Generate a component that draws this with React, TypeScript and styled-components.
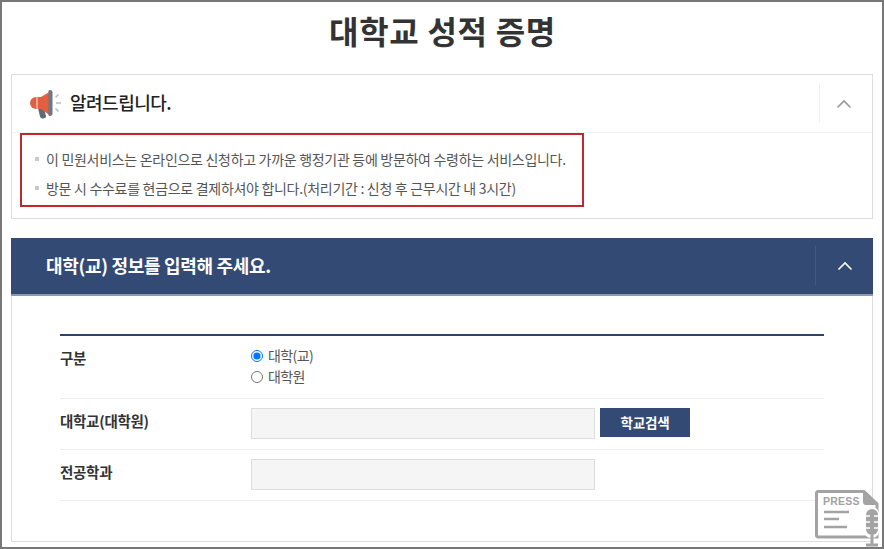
import React from "react";
import styled, { createGlobalStyle } from "styled-components";

const GlobalStyle = createGlobalStyle`
  html, body {
    margin: 0;
    padding: 0;
    background: #fff;
  }
  * {
    box-sizing: border-box;
  }
`;

const Frame = styled.div`
  position: relative;
  width: 884px;
  height: 549px;
  overflow: hidden;
  border: 2px solid #777;
  padding: 0 9px;
  background: #fff;
  font-family: "Noto Sans CJK KR", "Noto Sans", sans-serif;
  color: #333;
`;

const Title = styled.h1`
  margin: 0;
  height: 72px;
  padding: 5px 0 0 1px;
  text-align: center;
  font-size: 32px;
  line-height: 46px;
  font-weight: 700;
  letter-spacing: 0.7px;
  color: #333;
`;

const NoticeCard = styled.section`
  height: 145px;
  border: 1px solid #ddd;
`;

const CardHead = styled.div<{ $dark?: boolean }>`
  display: flex;
  align-items: center;
  height: ${(p) => (p.$dark ? "56px" : "58px")};
  margin: ${(p) => (p.$dark ? "0 -1px" : "0")};
  padding: ${(p) => (p.$dark ? "0 0 0 35px" : "0 0 0 18px")};
  background: ${(p) => (p.$dark ? "#334a75" : "#fff")};
  border-bottom: 1px solid ${(p) => (p.$dark ? "#334a75" : "#f1f1f1")};
`;

const CardTitle = styled.h2<{ $dark?: boolean }>`
  flex: 1;
  margin: ${(p) => (p.$dark ? "-2px 0 0 0" : "-3px 0 0 7px")};
  font-size: 18px;
  line-height: 26px;
  font-weight: ${(p) => (p.$dark ? 700 : 500)};
  letter-spacing: ${(p) => (p.$dark ? "-0.32px" : "-0.5px")};
  color: ${(p) => (p.$dark ? "#fff" : "#222")};
`;

const Toggle = styled.div<{ $dark?: boolean }>`
  display: flex;
  align-items: center;
  justify-content: center;
  width: ${(p) => (p.$dark ? "58px" : "53px")};
  height: 39px;
  padding-right: ${(p) => (p.$dark ? "0" : "4px")};
  border-left: 1px solid ${(p) => (p.$dark ? "#44597f" : "#f0f0f0")};
  color: ${(p) => (p.$dark ? "#fff" : "#999")};
`;

const RedBox = styled.div`
  width: 564px;
  height: 74px;
  margin: 0 0 0 8px;
  padding: 9px 0 0 13px;
  border: 2px solid #c1272d;
`;

const NoticeLine = styled.p`
  display: flex;
  align-items: center;
  margin: 0;
  height: 29px;
  font-size: 14px;
  letter-spacing: -0.3px;
  color: #555;
  white-space: nowrap;

  &::before {
    content: "";
    width: 4px;
    height: 4px;
    margin: 1px 7px 0 0;
    background: #c8c8c8;
  }
`;

const FormCard = styled.section`
  height: 304px;
  margin-top: 19px;
  border: 1px solid #ddd;
  border-top: 0;
`;

const DarkStrip = styled.div`
  height: 2px;
  margin: 0 -1px;
  background: #8c99af;
`;

const FormTable = styled.div`
  margin: 38px 48px 0 48px;
  border-top: 2px solid #2f4368;
`;

const Row = styled.div<{ $tall?: boolean }>`
  display: flex;
  height: ${(p) => (p.$tall ? "63px" : "51px")};
  padding-top: ${(p) => (p.$tall ? "8px" : "9px")};
  border-bottom: 1px solid #eee;
`;

const RowLabel = styled.div<{ $tall?: boolean }>`
  width: 191px;
  margin-top: ${(p) => (p.$tall ? "0" : "-1px")};
  font-size: 14.5px;
  line-height: 27px;
  font-weight: 700;
  letter-spacing: -0.28px;
  color: #333;
`;

const RadioGroup = styled.div`
  display: flex;
  flex-direction: column;
`;

const RadioLabel = styled.label`
  display: flex;
  align-items: center;
  height: 21px;
  font-size: 14px;
  letter-spacing: -0.6px;
  color: #555;
`;

const Radio = styled.input`
  width: 12px;
  height: 12px;
  margin: 3px 5px 0 0;
`;

const TextBox = styled.input`
  width: 344px;
  height: 31px;
  border: 1px solid #ddd;
  background: #f5f5f5;
`;

const SearchButton = styled.button`
  width: 90px;
  height: 29px;
  margin-left: 5px;
  padding: 0 0 1px;
  border: 0;
  background: #334a75;
  color: #fff;
  font-family: inherit;
  font-size: 13.5px;
  font-weight: 700;
  letter-spacing: -0.2px;
`;

const PressBadge = styled.svg`
  position: absolute;
  right: 1px;
  bottom: 0;
`;

function Chevron() {
  return (
    <svg width="16" height="10" viewBox="0 0 16 10" fill="none">
      <path d="M1.5 8.5 8 2l6.5 6.5" stroke="currentColor" strokeWidth="1.6" />
    </svg>
  );
}

function Megaphone() {
  return (
    <svg width="33" height="30" viewBox="0 0 33 30">
      <path d="M8 19l6 1 2 7c.3 1.500-1 2.500-3 2.500-1.500 0-2.500-.5-3-2z" fill="#5d6b78" />
      <path d="M6 8h5v12H6a6 6 0 0 1 0-12z" fill="#e2603f" />
      <path d="M11 8l9-5.500v24L11 20z" fill="#e2603f" />
      <path d="M6 8h2v12H6z" fill="#f0a48f" />
      <path d="M20 1c1.500 0 2.500 1 2.500 2.500v21c0 1.500-1 2.500-2.500 2.500-1 0-1.500-.5-1.500-1V2c0-.5.500-1 1.500-1z" fill="#6b7885" />
      <path d="M25.500 8.500l3-3M26 14h5M25.500 19.500l3 3" stroke="#b4bcc4" strokeWidth="1.500" />
    </svg>
  );
}

function Press() {
  return (
    <PressBadge width="66" height="60" viewBox="0 0 66 60">
      <path
        d="M3 4.500h46L62 17v33H3a1.500 1.500 0 0 1-1.500-1.500V6A1.500 1.500 0 0 1 3 4.500z"
        fill="#fff"
        stroke="#a3a3a3"
        strokeWidth="3"
      />
      <path d="M48 4.500V15a3 3 0 0 0 3 3h11z" fill="#a3a3a3" />
      <text x="8" y="18" fontFamily="Liberation Sans, sans-serif" fontSize="10.500" fontWeight="700" letterSpacing="0.200" fill="#a3a3a3">
        PRESS
      </text>
      <path d="M9 25h25M9 32h15M9 40h23" stroke="#a3a3a3" strokeWidth="2.500" />
      <rect x="49" y="20" width="15" height="31" rx="7" fill="#fff" />
      <rect x="51" y="22" width="12" height="26" rx="6" fill="#a3a3a3" />
      <path d="M50 29h5M59 29h5M50 35h5M59 35h5M50 41h5M59 41h5" stroke="#fff" strokeWidth="1.500" />
      <path d="M57 48v9M51 58h12" stroke="#a3a3a3" strokeWidth="3" />
    </PressBadge>
  );
}

export default function App() {
  return (
    <Frame>
      <GlobalStyle />
      <Title>대학교 성적 증명</Title>
      <NoticeCard>
        <CardHead>
          <Megaphone />
          <CardTitle>알려드립니다.</CardTitle>
          <Toggle>
            <Chevron />
          </Toggle>
        </CardHead>
        <RedBox>
          <NoticeLine>이 민원서비스는 온라인으로 신청하고 가까운 행정기관 등에 방문하여 수령하는 서비스입니다.</NoticeLine>
          <NoticeLine>방문 시 수수료를 현금으로 결제하셔야 합니다.(처리기간 : 신청 후 근무시간 내 3시간)</NoticeLine>
        </RedBox>
      </NoticeCard>
      <FormCard>
        <CardHead $dark>
          <CardTitle $dark>대학(교) 정보를 입력해 주세요.</CardTitle>
          <Toggle $dark>
            <Chevron />
          </Toggle>
        </CardHead>
        <DarkStrip />
        <FormTable>
          <Row $tall>
            <RowLabel $tall>구분</RowLabel>
            <RadioGroup>
              <RadioLabel>
                <Radio type="radio" name="kind" defaultChecked />
                대학(교)
              </RadioLabel>
              <RadioLabel>
                <Radio type="radio" name="kind" />
                대학원
              </RadioLabel>
            </RadioGroup>
          </Row>
          <Row>
            <RowLabel>대학교(대학원)</RowLabel>
            <TextBox readOnly />
            <SearchButton type="button">학교검색</SearchButton>
          </Row>
          <Row>
            <RowLabel>전공학과</RowLabel>
            <TextBox readOnly />
          </Row>
        </FormTable>
      </FormCard>
      <Press />
    </Frame>
  );
}
